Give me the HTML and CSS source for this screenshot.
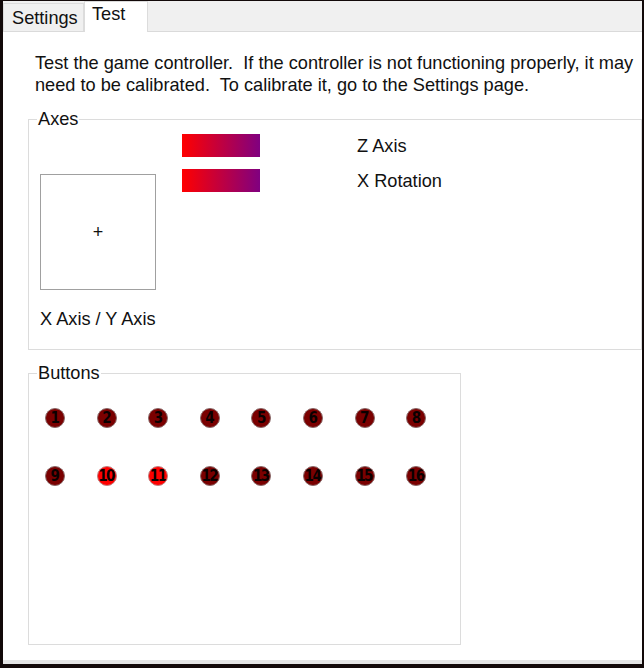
FILE: index.html
```html
<!DOCTYPE html>
<html>
<head>
<meta charset="utf-8">
<link rel="stylesheet" href="styles.css">
</head>
<body>
<div class="window">
  <div class="tabs">
    <div class="tab">Settings</div>
    <div class="tab active">Test</div>
  </div>
  <div class="page">
    <p class="intro">Test the game controller.&nbsp; If the controller is not functioning properly, it may need to be calibrated.&nbsp; To calibrate it, go to the Settings page.</p>
    <div class="group axes">
      <span class="group-title">Axes</span>
      <div class="axes-body">
        <div class="xy">
          <div class="xy-box"><span class="cross">+</span></div>
          <div class="xy-label">X Axis / Y Axis</div>
        </div>
        <div class="bars">
          <div class="bar"></div><div class="bar-label">Z Axis</div>
          <div class="bar"></div><div class="bar-label">X Rotation</div>
        </div>
      </div>
    </div>
    <div class="group buttons">
      <span class="group-title">Buttons</span>
      <div class="btn-grid">
        <span class="btn">1</span><span class="btn">2</span><span class="btn">3</span><span class="btn">4</span>
        <span class="btn">5</span><span class="btn">6</span><span class="btn">7</span><span class="btn">8</span>
        <span class="btn">9</span><span class="btn on">10</span><span class="btn on">11</span><span class="btn">12</span>
        <span class="btn">13</span><span class="btn">14</span><span class="btn">15</span><span class="btn">16</span>
      </div>
    </div>
  </div>
  <div class="bottom-strip"></div>
</div>
</body>
</html>
```
FILE: styles.css
```css
html, body {
  margin: 0;
  padding: 0;
  background: #120909;
  font-family: "Liberation Sans", Arial, sans-serif;
  color: #111;
}
.window {
  margin: 1px 2px 0 3px;
  width: 639px;
}
.tabs {
  height: 30px;
  background: #f0f0f0;
  border-bottom: 1px solid #dadada;
  display: flex;
  align-items: flex-end;
}
.tab {
  font-size: 18.2px;
  line-height: 20px;
  height: 28px;
  box-sizing: border-box;
  padding: 4px 0 0 8px;
  width: 81px;
  background: #f0f0f0;
  border: 1px solid #dcdcdc;
  border-bottom: none;
}
.tab.active {
  background: #fff;
  height: 31px;
  margin-bottom: -1px;
  width: 64px;
  padding: 2px 0 0 7px;
  border-color: #dcdcdc;
}
.page {
  background: #fff;
  height: 628px;
  padding: 20px 0 0 25px;
  box-sizing: border-box;
}
.intro {
  margin: 0 0 23px 7px;
  font-size: 18.2px;
  line-height: 22px;
}
.group {
  position: relative;
  border: 1px solid #dcdcdc;
}
.group-title {
  position: absolute;
  top: -11px;
  left: 8px;
  padding: 0 1px;
  background: #fff;
  font-size: 18.2px;
  line-height: 20px;
}
.axes {
  width: 612px;
}
.axes-body {
  display: flex;
  align-items: flex-start;
  padding: 14px 0 20px 11px;
}
.xy {
  margin-top: 40px;
}
.xy-box {
  width: 114px;
  height: 114px;
  border: 1px solid #a0a0a0;
  display: flex;
  align-items: center;
  justify-content: center;
}
.cross {
  font-size: 18px;
  line-height: 18px;
  font-weight: 300;
}
.xy-label {
  margin-top: 19px;
  font-size: 18.2px;
  line-height: 20px;
}
.bars {
  margin-left: 26px;
  display: grid;
  grid-template-columns: 78px auto;
  grid-auto-rows: 23px;
  column-gap: 97px;
  row-gap: 12px;
  align-items: center;
}
.bar {
  height: 23px;
  background: linear-gradient(to right, #ff0000, #800080);
}
.bar-label {
  font-size: 18.2px;
  line-height: 20px;
}
.buttons {
  margin-top: 23px;
  width: 431px;
  height: 270px;
}
.btn-grid {
  display: grid;
  grid-template-columns: repeat(8, 20px);
  grid-auto-rows: 20px;
  column-gap: 31.6px;
  row-gap: 38px;
  padding: 34px 0 0 16px;
}
.btn {
  width: 20px;
  height: 20px;
  box-sizing: border-box;
  border-radius: 50%;
  background: #7a0000;
  border: 1px solid #8a6a6a;
  display: flex;
  align-items: center;
  justify-content: center;
  font-family: "DejaVu Sans Condensed", "DejaVu Sans", sans-serif;
  font-size: 15px;
  font-weight: bold;
  letter-spacing: -1.5px;
  text-indent: -1px;
  color: #0a0000;
  overflow: hidden;
}
.btn.on {
  background: #ff0000;
  border-color: #c08080;
}
.bottom-strip {
  height: 4px;
  background: #e4e4e4;
}
```
